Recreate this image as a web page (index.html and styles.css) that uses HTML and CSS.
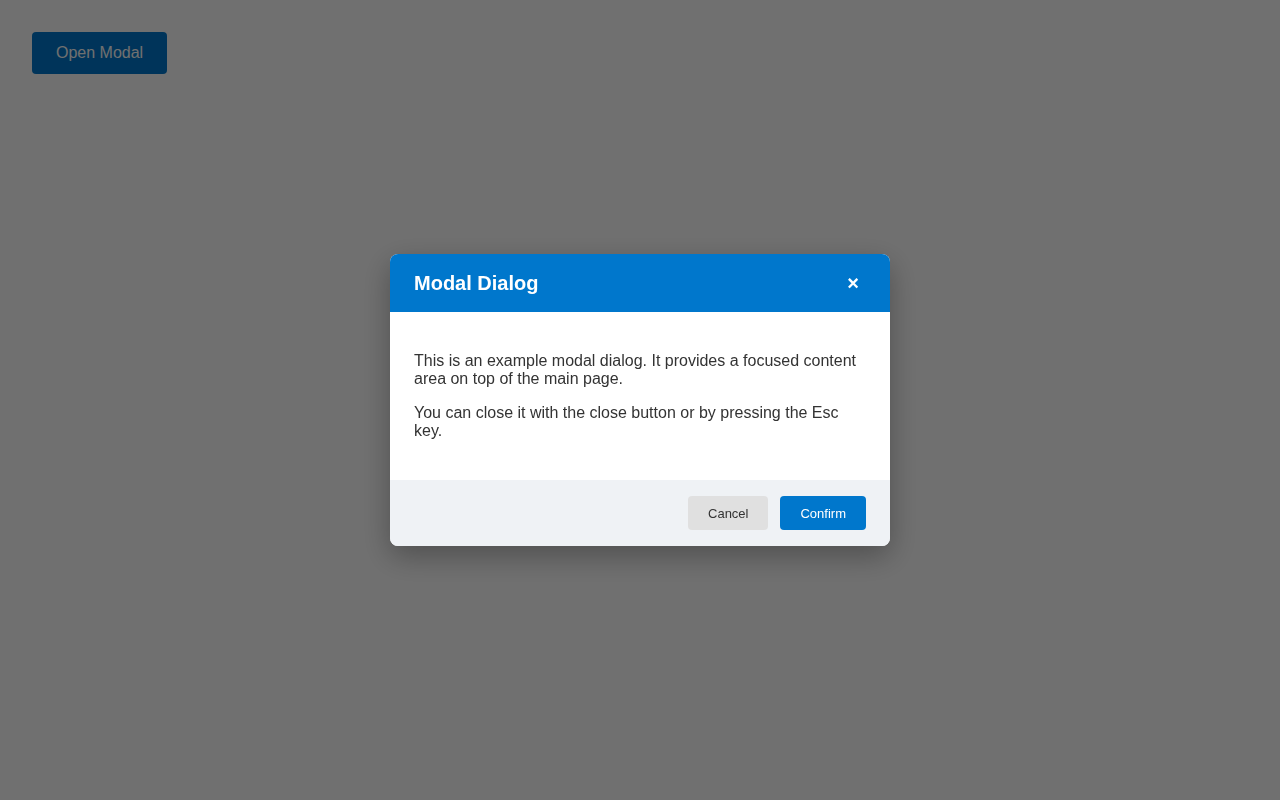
FILE: index.html
```html
<!DOCTYPE html>
<html lang="en">
<head>
    <meta charset="UTF-8">
    <meta name="viewport" content="width=device-width, initial-scale=1.0">
    <title>Modal Dialog</title>
    <link rel="stylesheet" href="styles.css">
</head>
<body>
    <button class="open-btn" id="openModal">Open Modal</button>

    <div class="overlay" id="overlay">
        <div class="modal" role="dialog" aria-labelledby="modalTitle">
            <div class="modal-header">
                <h2 id="modalTitle">Modal Dialog</h2>
                <button class="close-btn" aria-label="Close">&times;</button>
            </div>
            <div class="modal-body">
                <p>This is an example modal dialog. It provides a focused content area on top of the main page.</p>
                <p>You can close it with the close button or by pressing the Esc key.</p>
            </div>
            <div class="modal-footer">
                <button class="btn btn-cancel">Cancel</button>
                <button class="btn btn-confirm">Confirm</button>
            </div>
        </div>
    </div>
</body>
</html>
```

FILE: styles.css
```css
body {
    font-family: "Liberation Sans", Arial, sans-serif;
    background-color: #fff;
    margin: 0;
    padding: 32px;
    color: #333;
}
.open-btn {
    font-family: inherit;
    font-size: 16px;
    padding: 12px 24px;
    line-height: 18px;
    background-color: #0077cc;
    color: white;
    border: none;
    border-radius: 4px;
    cursor: pointer;
}
.overlay {
    position: fixed;
    inset: 0;
    background-color: rgba(0, 0, 0, 0.56);
    display: flex;
    justify-content: center;
    align-items: center;
}
.modal {
    background-color: white;
    width: 500px;
    border-radius: 8px;
    overflow: hidden;
    box-shadow: 0 10px 30px rgba(0, 0, 0, 0.3);
}
.modal-header {
    background-color: #0077cc;
    color: white;
    height: 58px;
    padding: 0 24px;
    display: flex;
    align-items: center;
    justify-content: space-between;
}
.modal-header h2 {
    margin: 0;
    font-size: 20px;
    font-weight: bold;
}
.close-btn {
    background: none;
    border: none;
    color: white;
    font-family: inherit;
    font-size: 20px;
    font-weight: bold;
    width: 26px;
    height: 26px;
    padding: 0;
    display: flex;
    align-items: center;
    justify-content: center;
    cursor: pointer;
}
.modal-body {
    padding: 24px;
    font-size: 16px;
    line-height: 18px;
}
.modal-body p {
    margin: 16px 0;
}
.modal-footer {
    background-color: #eff2f5;
    padding: 16px 24px;
    display: flex;
    justify-content: flex-end;
    gap: 12px;
}
.btn {
    font-family: inherit;
    font-size: 13px;
    height: 34px;
    padding: 0 20px;
    border: none;
    border-radius: 4px;
    cursor: pointer;
}
.btn-cancel {
    background-color: #e0e0e0;
    color: #333;
}
.btn-confirm {
    background-color: #0077cc;
    color: white;
}
```
